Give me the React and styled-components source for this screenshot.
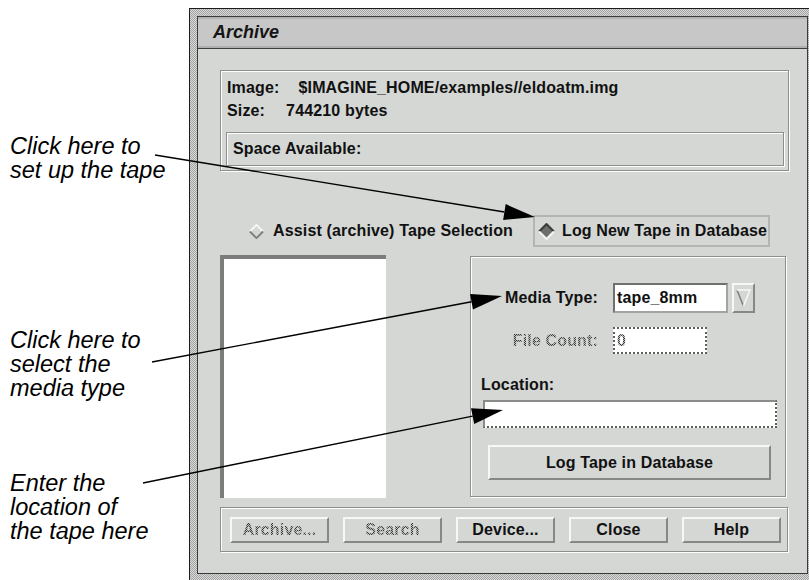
import styled, { createGlobalStyle, css } from "styled-components";

const GlobalStyle = createGlobalStyle`
  *, *::before, *::after { box-sizing: border-box; }
  html, body { margin: 0; padding: 0; background: #fff; }
  body { font-family: "Liberation Sans", Arial, sans-serif; }
`;

const etched = css`
  border: 1px solid #8b8e8b;
  box-shadow: inset 1px 1px 0 #fff, 1px 1px 0 #fff;
`;

const raised = css`
  background: #d4d7d4;
  border: 2px solid;
  border-color: #f7f7f7 #858885 #858885 #f7f7f7;
`;

const Page = styled.div`
  position: relative;
  width: 809px;
  height: 580px;
  overflow: hidden;
  display: flex;
  align-items: flex-start;
  background: #fff;
`;

const Callouts = styled.div`
  width: 189px;
  flex-shrink: 0;
  padding: 134px 0 0 10px;
`;

const Callout = styled.p`
  margin: ${(p) => p.$top}px 0 0;
  font: italic 23.5px/24px "Liberation Sans", Arial, sans-serif;
  color: #000;
  white-space: pre-line;
`;

const Window = styled.div`
  margin-top: 8px;
  flex-shrink: 0;
  width: 627px;
  height: 574px;
  border: 1px solid #1c1c1c;
  padding: 7px;
  background: repeating-conic-gradient(#a4a4a4 0% 25%, #d9d9d9 0% 50%) 0 0 / 2px 2px;
`;

const Frame = styled.div`
  height: 100%;
  display: flex;
  flex-direction: column;
  border: 1px solid #3a3a3a;
  background: #d4d7d4;
`;

const TitleBar = styled.div`
  height: 32px;
  flex-shrink: 0;
  display: flex;
  align-items: center;
  padding-left: 15px;
  background: #c7c7c7;
  border-bottom: 1px solid #3e3e3e;
  box-shadow: inset 0 2px 0 #b4b4b4, inset 0 -2px 0 #afafaf;
  font: italic bold 18px "Liberation Sans", Arial, sans-serif;
  color: #151515;
`;

const Client = styled.div`
  flex: 1;
  padding: 21px 18px 0 22px;
  font: bold 16px "Liberation Sans", Arial, sans-serif;
  letter-spacing: 0.15px;
  color: #111;
`;

const InfoBox = styled.div`
  ${etched};
  height: 101px;
  padding: 5px 4px 4px 5px;
`;

const InfoLine = styled.div`
  height: 23px;
  display: flex;
  align-items: center;
  padding-left: 1px;
`;

const InfoValue = styled.span`
  margin-left: ${(p) => p.$gap}px;
`;

const SpaceBox = styled.div`
  ${etched};
  margin-top: 10px;
  height: 34px;
  display: flex;
  align-items: center;
  padding-left: 6px;
`;

const RadioRow = styled.div`
  margin-top: 44px;
  height: 32px;
  display: flex;
  align-items: center;
  padding-left: 29px;
`;

const Radio = styled.div`
  display: flex;
  align-items: center;
  gap: ${(p) => (p.$on ? 7 : 9)}px;
`;

const LogBox = styled.div`
  margin-left: 20px;
  width: 237px;
  height: 32px;
  display: flex;
  align-items: center;
  padding-left: 3px;
  border: 2px solid #b3b5b3;
`;

const Middle = styled.div`
  margin-top: 8px;
  height: 243px;
  display: flex;
  align-items: flex-start;
`;

const ListBox = styled.div`
  width: 166px;
  height: 100%;
  background: #fff;
  border-top: 4px solid #7b7d7b;
  border-left: 4px solid #7b7d7b;
`;

const Panel = styled.div`
  ${etched};
  margin: 1px 0 0 84px;
  width: 316px;
  height: 241px;
  display: flex;
  flex-direction: column;
`;

const FieldRow = styled.div`
  margin-top: ${(p) => p.$top}px;
  display: flex;
  align-items: center;
`;

const FieldLabel = styled.span`
  width: 127px;
  margin-right: 15px;
  text-align: right;
`;

const stipple = css`
  color: transparent;
  background: repeating-conic-gradient(#3a3a3a 0% 25%, #b8bab8 0% 50%) 0 0 / 2px 2px;
  -webkit-background-clip: text;
  background-clip: text;
`;

const Dim = styled.span`
  ${stipple};
`;

const Field = styled.div`
  width: ${(p) => p.$w}px;
  height: ${(p) => p.$h}px;
  margin-left: ${(p) => p.$left || 0}px;
  display: flex;
  align-items: center;
  padding-left: 2px;
  background: #fff;
  border: 2px solid;
  border-color: #6f716f #a2a4a2 #a2a4a2 #6f716f;
  ${(p) =>
    p.$dotted &&
    css`
      border: 2px dotted #5e5e5e;
    `}
  ${(p) =>
    p.$half &&
    css`
      border-color: #8a8c8a;
      border-right-style: dotted;
      border-bottom-style: dotted;
      border-right-color: #5e5e5e;
      border-bottom-color: #5e5e5e;
    `}
`;

const DropButton = styled.div`
  ${raised};
  margin-left: 4px;
  width: 23px;
  height: 30px;
  display: flex;
  align-items: center;
  justify-content: center;
`;

const SubLabel = styled.div`
  margin-top: 22px;
  height: 18px;
  line-height: 18px;
  padding-left: 10px;
`;

const Button = styled.button`
  ${raised};
  width: ${(p) => p.$w}px;
  height: ${(p) => p.$h}px;
  margin: ${(p) => p.$margin || 0};
  padding: 0;
  font: bold 16px "Liberation Sans", Arial, sans-serif;
  letter-spacing: 0.15px;
  color: #111;
  cursor: default;
`;

const ButtonBar = styled.div`
  ${etched};
  margin-top: 9px;
  width: 568px;
  height: 45px;
  display: flex;
  align-items: center;
  padding-left: 9px;
  gap: 14px;
`;

const Overlay = styled.svg`
  position: absolute;
  left: 0;
  top: 0;
  width: 809px;
  height: 580px;
  pointer-events: none;
`;

const Diamond = ({ on }) => (
  <svg width={on ? 17 : 15} height={on ? 17 : 15} viewBox="0 0 16 16">
    <polygon points="8,1 15,8 8,15 1,8" fill={on ? "#6d6f6d" : "#d4d7d4"} />
    <polyline points="1,8 8,1 15,8" fill="none" stroke={on ? "#3c3c3c" : "#f7f7f7"} strokeWidth="2" />
    <polyline points="1,8 8,15 15,8" fill="none" stroke={on ? "#f4f4f4" : "#7d7f7d"} strokeWidth="2" />
  </svg>
);

const Arrow = ({ from, to }) => {
  const dx = to[0] - from[0];
  const dy = to[1] - from[1];
  const len = Math.hypot(dx, dy);
  const ux = dx / len;
  const uy = dy / len;
  const bx = to[0] - 31 * ux;
  const by = to[1] - 31 * uy;
  const px = -uy * 8;
  const py = ux * 8;
  return (
    <g>
      <line x1={from[0]} y1={from[1]} x2={bx} y2={by} stroke="#000" strokeWidth="1.4" />
      <polygon points={`${to[0]},${to[1]} ${bx + px},${by + py} ${bx - px},${by - py}`} fill="#000" />
    </g>
  );
};

const arrows = [
  { from: [155, 155], to: [535, 217] },
  { from: [152, 362], to: [502, 296] },
  { from: [143, 483], to: [503, 410] },
];

export default function App() {
  return (
    <Page>
      <GlobalStyle />
      <Callouts>
        <Callout $top={0}>{"Click here to\nset up the tape"}</Callout>
        <Callout $top={146}>{"Click here to\nselect the\nmedia type"}</Callout>
        <Callout $top={71}>{"Enter the\nlocation of\nthe tape here"}</Callout>
      </Callouts>

      <Window>
        <Frame>
          <TitleBar>Archive</TitleBar>
          <Client>
            <InfoBox>
              <InfoLine>
                Image:<InfoValue $gap={19}>$IMAGINE_HOME/examples//eldoatm.img</InfoValue>
              </InfoLine>
              <InfoLine>
                Size:<InfoValue $gap={21}>744210 bytes</InfoValue>
              </InfoLine>
              <SpaceBox>Space Available:</SpaceBox>
            </InfoBox>

            <RadioRow>
              <Radio>
                <Diamond />
                <span>Assist (archive) Tape Selection</span>
              </Radio>
              <LogBox>
                <Radio $on>
                  <Diamond on />
                  <span>Log New Tape in Database</span>
                </Radio>
              </LogBox>
            </RadioRow>

            <Middle>
              <ListBox />
              <Panel>
                <FieldRow $top={26}>
                  <FieldLabel>Media Type:</FieldLabel>
                  <Field $w={115} $h={30}>tape_8mm</Field>
                  <DropButton>
                    <svg width="15" height="20" viewBox="0 0 15 20">
                      <polyline points="1,2 7.5,18" fill="none" stroke="#7d7f7d" strokeWidth="1.5" />
                      <polyline points="1,2 14,2 7.5,18" fill="none" stroke="#f7f7f7" strokeWidth="1.5" />
                    </svg>
                  </DropButton>
                </FieldRow>
                <FieldRow $top={14}>
                  <FieldLabel>
                    <Dim>File Count:</Dim>
                  </FieldLabel>
                  <Field $w={94} $h={27} $dotted>
                    <Dim>0</Dim>
                  </Field>
                </FieldRow>
                <SubLabel>Location:</SubLabel>
                <FieldRow $top={6}>
                  <Field $w={294} $h={28} $left={12} $half />
                </FieldRow>
                <Button $w={283} $h={35} $margin="17px 0 0 17px">
                  Log Tape in Database
                </Button>
              </Panel>
            </Middle>

            <ButtonBar>
              <Button $w={99} $h={26} disabled>
                <Dim>Archive...</Dim>
              </Button>
              <Button $w={99} $h={26} disabled>
                <Dim>Search</Dim>
              </Button>
              <Button $w={99} $h={26}>Device...</Button>
              <Button $w={99} $h={26}>Close</Button>
              <Button $w={99} $h={26}>Help</Button>
            </ButtonBar>
          </Client>
        </Frame>
      </Window>

      <Overlay viewBox="0 0 809 580">
        {arrows.map((a, i) => (
          <Arrow key={i} from={a.from} to={a.to} />
        ))}
      </Overlay>
    </Page>
  );
}
